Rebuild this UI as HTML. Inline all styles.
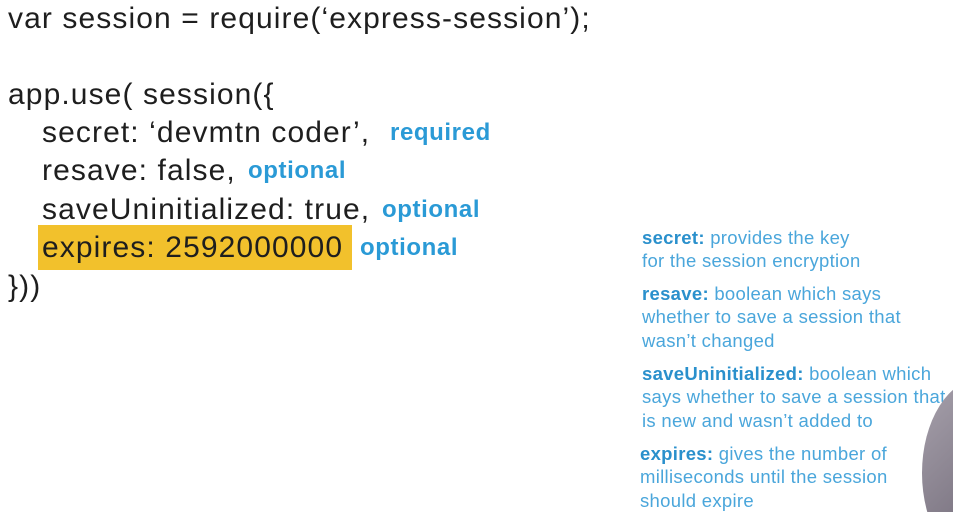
<!DOCTYPE html>
<html><head><style>
html,body{margin:0;width:953px;height:512px;overflow:hidden;}
body{background:#fff;position:relative;font-family:"Liberation Sans",sans-serif;}
.c{position:absolute;left:0;font-size:30px;letter-spacing:1.1px;color:#1e1e1e;white-space:nowrap;line-height:38px;}
.o{position:absolute;color:#2a9ad6;font-weight:bold;font-size:24px;letter-spacing:0.6px;line-height:38px;white-space:nowrap;}
.hl{position:absolute;left:38px;top:225px;width:314px;height:45px;background:#f2c12c;}
.r{position:absolute;left:642px;font-size:18.5px;letter-spacing:0.3px;color:#4aa6db;line-height:23.3px;white-space:nowrap;}
.r b{color:#2a90cc;}
.clip{position:absolute;left:900px;top:360px;width:53px;height:152px;overflow:hidden;}
.face{position:absolute;left:22px;top:18px;width:120px;height:190px;border-radius:50%;background:linear-gradient(135deg,#a8a2ad,#7d7683 60%,#5c5560);}
</style></head><body>
<div class="hl"></div>
<div class="c" style="left:8px;top:0px">var session = require(‘express-session’);</div>
<div class="c" style="left:8px;top:76px">app.use( session({</div>
<div class="c" style="left:42px;top:114px">secret: ‘devmtn coder’,</div>
<div class="o" style="left:390px;top:114px">required</div>
<div class="c" style="left:42px;top:152px">resave: false,</div>
<div class="o" style="left:248px;top:152px">optional</div>
<div class="c" style="left:42px;top:191px">saveUninitialized: true,</div>
<div class="o" style="left:382px;top:191px">optional</div>
<div class="c" style="left:42px;top:229px">expires: 2592000000</div>
<div class="o" style="left:360px;top:229px">optional</div>
<div class="c" style="left:8px;top:268px">}))</div>
<div class="r" style="top:226px"><b>secret:</b> provides the key<br>for the session encryption</div>
<div class="r" style="top:282px"><b>resave:</b> boolean which says<br>whether to save a session that<br>wasn’t changed</div>
<div class="r" style="top:362px"><b>saveUninitialized:</b> boolean which<br>says whether to save a session that<br>is new and wasn’t added to</div>
<div class="clip"><div class="face"></div></div>
<div class="r" style="top:442px;left:640px;height:70px;overflow:hidden"><b>expires:</b> gives the number of<br>milliseconds until the session<br>should expire</div>
</body></html>
